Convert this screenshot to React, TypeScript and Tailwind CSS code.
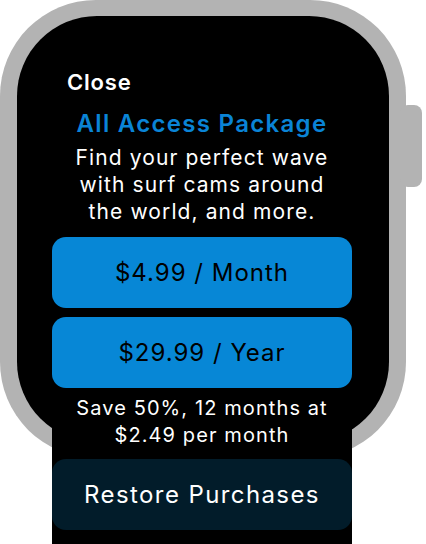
export default function App() {
  return (
    <div
      className="relative w-[426px] h-[544px] overflow-hidden bg-white"
      style={{ fontFamily: "Inter, 'Noto Sans', sans-serif" }}
    >
      {/* watch case */}
      <div className="absolute left-0 top-0 w-[406px] h-[458px] rounded-[96px] bg-[#b3b3b3] px-[17px] py-[16px]">
        <div className="w-full h-full rounded-[80px] bg-black" />
      </div>
      <div className="absolute left-[400px] top-[105px] w-[22px] h-[82px] rounded-[8px] bg-[#b3b3b3]" />

      {/* scroll content */}
      <div className="relative mt-[40px] ml-[52px] w-[300px] h-[504px] bg-black pt-[29px] flex flex-col">
        <div className="pl-[15px] text-[22px] leading-[26px] font-semibold tracking-[0.8px] text-white">Close</div>
        <div className="mt-[15px] text-center text-[24px] leading-[28px] font-semibold tracking-[1.3px] text-[#0a84d6]">
          All Access Package
        </div>
        <p className="mt-[6px] text-center text-[21px] leading-[27px] tracking-[1.1px] text-white">
          Find your perfect wave
          <br />
          with surf cams around
          <br />
          the world, and more.
        </p>
        <button className="mt-[12px] h-[71px] rounded-[14px] bg-[#0787d6] text-[24px] tracking-[1px] text-black">
          $4.99 / Month
        </button>
        <button className="mt-[9px] h-[71px] rounded-[14px] bg-[#0787d6] text-[24px] tracking-[1px] text-black">
          $29.99 / Year
        </button>
        <p className="mt-[7px] text-center text-[20px] leading-[27px] tracking-[1.1px] text-white">
          Save 50%, 12 months at
          <br />
          $2.49 per month
        </p>
        <button className="mt-[10px] h-[71px] rounded-[14px] bg-[#021c2a] text-[24px] tracking-[1.4px] text-white">
          Restore Purchases
        </button>
      </div>
    </div>
  );
}
